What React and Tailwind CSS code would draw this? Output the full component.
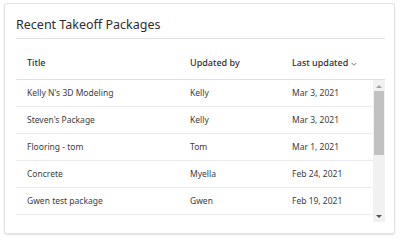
import React from "react";

const rows = [
  ["Kelly N's 3D Modeling", "Kelly", "Mar 3, 2021"],
  ["Steven's Package", "Kelly", "Mar 3, 2021"],
  ["Flooring - tom", "Tom", "Mar 1, 2021"],
  ["Concrete", "Myella", "Feb 24, 2021"],
  ["Gwen test package", "Gwen", "Feb 19, 2021"],
];

export default function App() {
  return (
    <div className="w-[400px] h-[240px] bg-white pt-[3px] pl-[4px]" style={{ fontFamily: '"Noto Sans", "Open Sans", sans-serif' }}>
      <div className="w-[391px] h-[231px] rounded-[3px] border border-[#e2e2e2] shadow-[0_1px_2px_rgba(0,0,0,0.12)] bg-white pl-[11px] pr-[9px] flex flex-col">
        <div className="h-[35px] border-b border-[#e0e0e0] flex items-center pt-[8px]">
          <span className="text-[12.5px] text-[#2e2e2e] leading-none">Recent Takeoff Packages</span>
        </div>
        <div className="h-[41px] border-b border-[#e0e0e0] flex items-center pt-[8px] text-[9px] font-medium text-[#2f2f2f]">
          <div className="w-[174px] pl-[11px]">Title</div>
          <div className="w-[102px]">Updated by</div>
          <div className="flex items-center gap-[3px]">
            Last updated
            <svg width="6" height="4" viewBox="0 0 6 4" className="mt-[1px]">
              <path d="M0.5 0.8 L3 3.3 L5.5 0.8" fill="none" stroke="#555" strokeWidth="0.8" />
            </svg>
          </div>
        </div>
        <div className="flex h-[142px]">
          <div className="flex-1 overflow-hidden">
            {rows.map((r, i) => (
              <div key={i} className="h-[27px] border-b border-[#ebebeb] flex items-center text-[8.5px] text-[#3c3c3c]">
                <div className="w-[174px] pl-[11px]">{r[0]}</div>
                <div className="w-[102px]">{r[1]}</div>
                <div>{r[2]}</div>
              </div>
            ))}
          </div>
          <div className="w-[12px] bg-[#f1f1f1] flex flex-col items-center">
            <div className="h-[11px] flex items-center justify-center">
              <svg width="6" height="4" viewBox="0 0 6 4"><path d="M0 4 L3 1 L6 4 Z" fill="#a3a3a3" /></svg>
            </div>
            <div className="w-[10px] h-[64px] bg-[#c1c1c1]"></div>
            <div className="flex-1"></div>
            <div className="h-[11px] flex items-center justify-center">
              <svg width="6" height="4" viewBox="0 0 6 4"><path d="M0 0 L6 0 L3 3 Z" fill="#505050" /></svg>
            </div>
          </div>
        </div>
      </div>
    </div>
  );
}
